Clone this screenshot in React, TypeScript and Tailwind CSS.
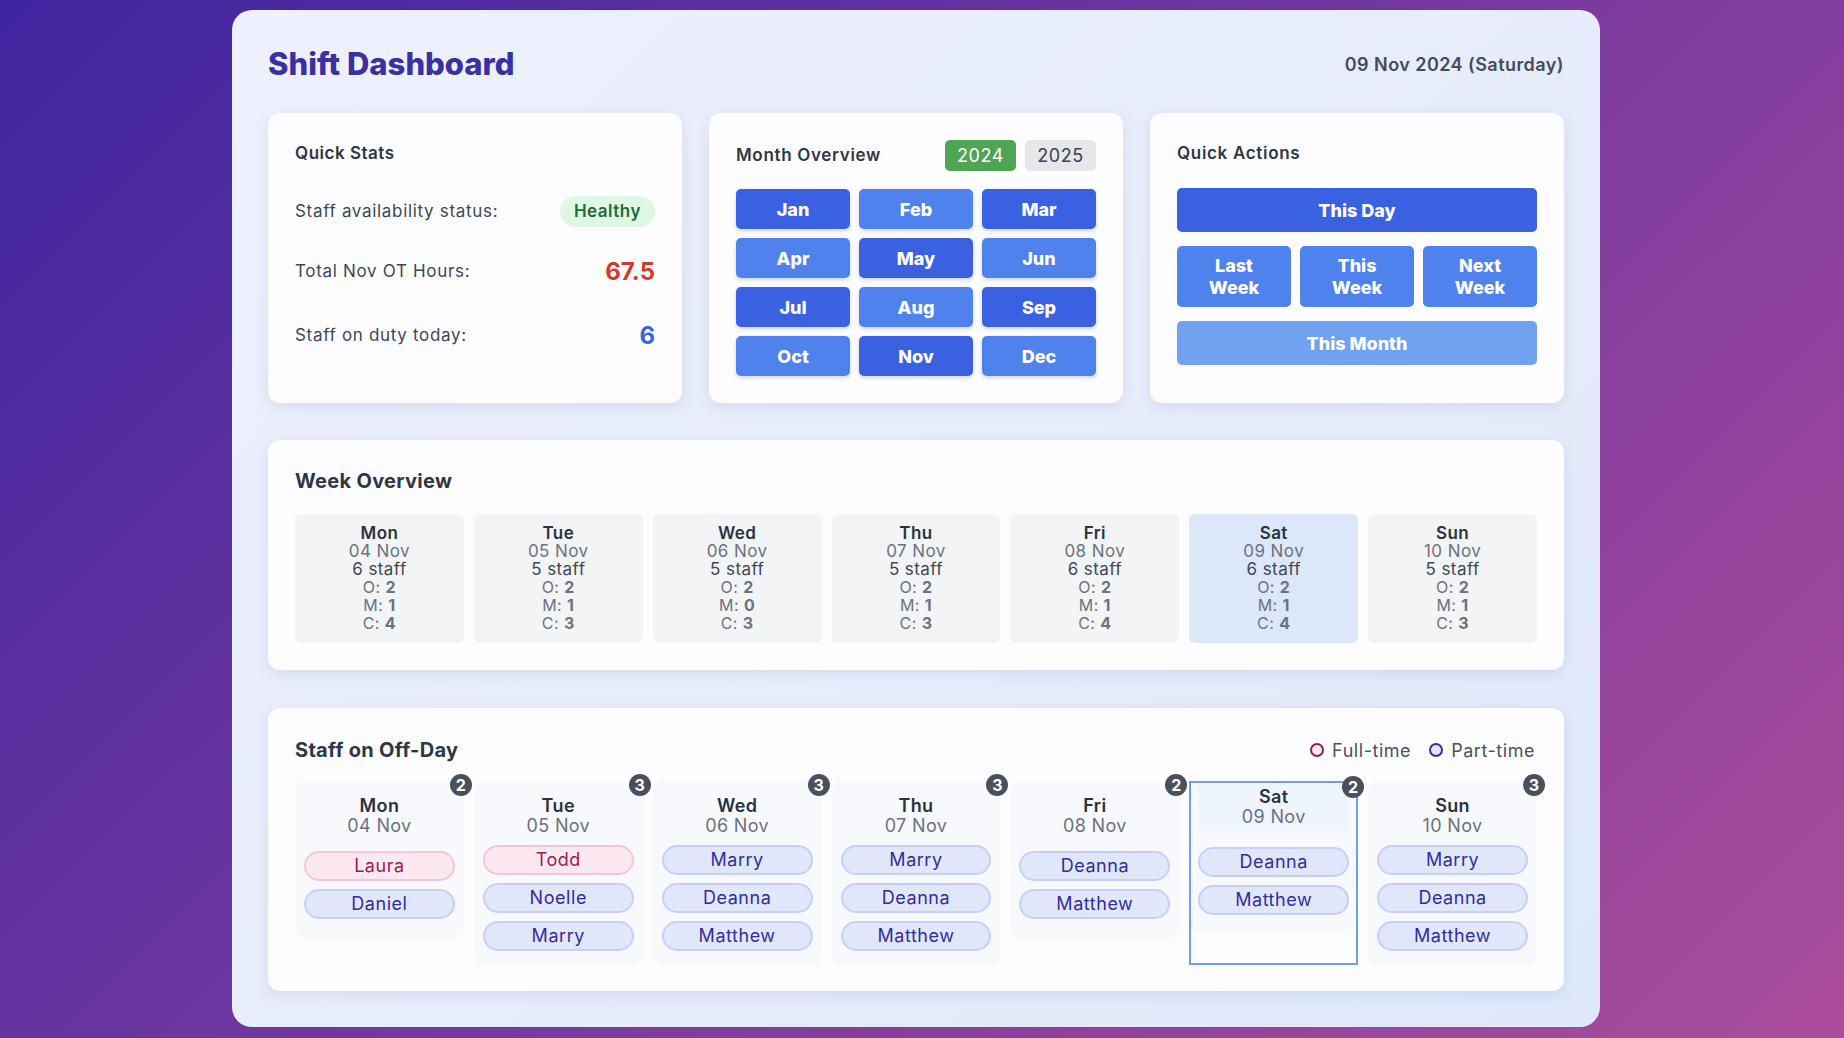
import React from "react";

type Week = { day: string; date: string; staff: number; o: number; m: number; c: number; today?: boolean };
type OffDay = { day: string; date: string; today?: boolean; people: { name: string; full: boolean }[] };

const months: [string, boolean][] = [
  ["Jan", true], ["Feb", false], ["Mar", true],
  ["Apr", false], ["May", true], ["Jun", false],
  ["Jul", true], ["Aug", false], ["Sep", true],
  ["Oct", false], ["Nov", true], ["Dec", false],
];

const week: Week[] = [
  { day: "Mon", date: "04 Nov", staff: 6, o: 2, m: 1, c: 4 },
  { day: "Tue", date: "05 Nov", staff: 5, o: 2, m: 1, c: 3 },
  { day: "Wed", date: "06 Nov", staff: 5, o: 2, m: 0, c: 3 },
  { day: "Thu", date: "07 Nov", staff: 5, o: 2, m: 1, c: 3 },
  { day: "Fri", date: "08 Nov", staff: 6, o: 2, m: 1, c: 4 },
  { day: "Sat", date: "09 Nov", staff: 6, o: 2, m: 1, c: 4, today: true },
  { day: "Sun", date: "10 Nov", staff: 5, o: 2, m: 1, c: 3 },
];

const pt = (name: string) => ({ name, full: false });
const ft = (name: string) => ({ name, full: true });

const offDays: OffDay[] = [
  { day: "Mon", date: "04 Nov", people: [ft("Laura"), pt("Daniel")] },
  { day: "Tue", date: "05 Nov", people: [ft("Todd"), pt("Noelle"), pt("Marry")] },
  { day: "Wed", date: "06 Nov", people: [pt("Marry"), pt("Deanna"), pt("Matthew")] },
  { day: "Thu", date: "07 Nov", people: [pt("Marry"), pt("Deanna"), pt("Matthew")] },
  { day: "Fri", date: "08 Nov", people: [pt("Deanna"), pt("Matthew")] },
  { day: "Sat", date: "09 Nov", today: true, people: [pt("Deanna"), pt("Matthew")] },
  { day: "Sun", date: "10 Nov", people: [pt("Marry"), pt("Deanna"), pt("Matthew")] },
];

const card = "rounded-xl bg-[#fdfdff] shadow-[0_4px_14px_rgba(70,90,160,0.13)]";

function QuickStats() {
  return (
    <section className={`${card} p-[27px]`}>
      <h2 className="text-[17px] font-semibold leading-[26px] tracking-[0.03em] text-[#2f3645]">Quick Stats</h2>
      <div className="mt-[30px] flex flex-col text-[17px] tracking-[0.04em] text-[#3f4654]">
        <div className="flex h-[31px] items-center justify-between">
          <span>Staff availability status:</span>
          <span className="flex h-[31px] items-center rounded-full bg-[#dff7e5] px-[14px] text-[17px] font-semibold tracking-[0.03em] text-[#1f6b34]">
            Healthy
          </span>
        </div>
        <div className="mt-[29px] flex h-[32px] items-center justify-between">
          <span>Total Nov OT Hours:</span>
          <span className="text-[24px] font-bold tracking-normal text-[#d03a2f]">67.5</span>
        </div>
        <div className="mt-[32px] flex h-[32px] items-center justify-between">
          <span>Staff on duty today:</span>
          <span className="text-[24px] font-bold tracking-normal text-[#3b62e0]">6</span>
        </div>
      </div>
    </section>
  );
}

function MonthOverview() {
  return (
    <section className={`${card} p-[27px]`}>
      <div className="flex h-[31px] items-center justify-between">
        <h2 className="text-[17px] font-semibold tracking-[0.04em] text-[#2f3645]">Month Overview</h2>
        <div className="flex gap-[9px] text-[18px]">
          <button className="h-[31px] w-[71px] rounded-[5px] bg-[#4ea554] tracking-[0.03em] text-white">2024</button>
          <button className="h-[31px] w-[71px] rounded-[5px] bg-[#e5e7eb] tracking-[0.03em] text-[#374151]">2025</button>
        </div>
      </div>
      <div className="mt-[18px] grid grid-cols-3 gap-[9px]">
        {months.map(([m, dark]) => (
          <button
            key={m}
            className={`h-[40px] rounded-[5px] text-[18px] font-extrabold text-white shadow-[0_2px_4px_rgba(40,60,140,0.2)] ${
              dark ? "bg-[#3a61e1]" : "bg-[#5082ed]"
            }`}
          >
            {m}
          </button>
        ))}
      </div>
    </section>
  );
}

function QuickActions() {
  return (
    <section className={`${card} p-[27px]`}>
      <h2 className="text-[17px] font-semibold leading-[26px] tracking-[0.04em] text-[#2f3645]">Quick Actions</h2>
      <button className="mt-[22px] h-[44px] w-full rounded-[5px] bg-[#3a61e1] text-[18px] font-extrabold text-white">
        This Day
      </button>
      <div className="mt-[14px] grid grid-cols-3 gap-[9px]">
        {["Last", "This", "Next"].map((w) => (
          <button
            key={w}
            className="h-[61px] rounded-[5px] bg-[#5082ed] text-[18px] font-extrabold leading-[22px] text-white"
          >
            {w}
            <br />
            Week
          </button>
        ))}
      </div>
      <button className="mt-[14px] h-[44px] w-full rounded-[5px] bg-[#71a2f2] text-[18px] font-extrabold text-white">
        This Month
      </button>
    </section>
  );
}

function WeekOverview() {
  return (
    <section className={`${card} px-[27px] pb-[27px] pt-[27px]`}>
      <h2 className="text-[20px] font-bold leading-[28px] tracking-[0.015em] text-[#2f3645]">Week Overview</h2>
      <div className="mt-[19px] grid grid-cols-7 gap-[10px]">
        {week.map((d) => (
          <div
            key={d.day}
            className={`rounded-md pb-[11px] pt-[10px] text-center text-[17px] leading-[18px] tracking-[0.025em] ${
              d.today ? "bg-[#dce7f9]" : "bg-[#f3f4f6]"
            }`}
          >
            <div className="font-semibold text-[#2b3240]">{d.day}</div>
            <div className="text-[#6b7280]">{d.date}</div>
            <div className="text-[#3f4654]">{d.staff} staff</div>
            <div className="text-[16px] text-[#6b7280]">
              O: <b className="font-bold">{d.o}</b>
            </div>
            <div className="text-[16px] text-[#6b7280]">
              M: <b className="font-bold">{d.m}</b>
            </div>
            <div className="text-[16px] text-[#6b7280]">
              C: <b className="font-bold">{d.c}</b>
            </div>
          </div>
        ))}
      </div>
    </section>
  );
}

function Chip({ name, full }: { name: string; full: boolean }) {
  return (
    <div
      className={`flex h-[30px] items-center justify-center rounded-full border-2 pb-[1px] text-[18px] tracking-[0.03em] ${
        full ? "border-[#f5c6d8] bg-[#fbe8f0] text-[#9d1c4b]" : "border-[#c6d0f7] bg-[#e1e7fb] text-[#332c9e]"
      }`}
    >
      {name}
    </div>
  );
}

function Badge({ n }: { n: number }) {
  return (
    <span className="absolute -right-[8px] -top-[7px] flex h-[22px] w-[22px] items-center justify-center rounded-full bg-[#4a505c] text-[16px] font-bold text-white">
      {n}
    </span>
  );
}

function OffDayColumn({ d }: { d: OffDay }) {
  const chips = (
    <div className="flex min-h-[79px] flex-col justify-center gap-[8px]">
      {d.people.map((p) => (
        <Chip key={p.name} {...p} />
      ))}
    </div>
  );
  const head = (
    <>
      <div className="text-[18px] font-semibold leading-[20px] tracking-[0.02em] text-[#2b3240]">{d.day}</div>
      <div className="text-[18px] leading-[20px] tracking-[0.02em] text-[#6b7280]">{d.date}</div>
    </>
  );

  if (d.today) {
    return (
      <div className="relative self-stretch border-2 border-[#6b9ef0]">
        <div className="rounded-b-[10px] bg-[#f8f9fc] px-[7px] pb-[13px]">
          <div className="bg-[#eff5ff] py-[4px] text-center">{head}</div>
          <div className="mt-[10px]">{chips}</div>
        </div>
        <Badge n={d.people.length} />
      </div>
    );
  }

  return (
    <div className="relative rounded-[10px] bg-[#f8f9fc] px-[9px] pb-[14px] pt-[15px]">
      <div className="text-center">{head}</div>
      <div className="mt-[9px]">{chips}</div>
      <Badge n={d.people.length} />
    </div>
  );
}

function OffDayPanel() {
  return (
    <section className={`${card} px-[27px] pb-[26px] pt-[28px]`}>
      <div className="flex items-center justify-between">
        <h2 className="text-[20px] font-bold leading-[28px] tracking-[0.015em] text-[#2f3645]">Staff on Off-Day</h2>
        <div className="flex items-center gap-[18px] pr-[2px] text-[18px] tracking-[0.03em] text-[#4b5260]">
          <span className="flex items-center gap-[8px]">
            <span className="h-[14px] w-[14px] rounded-full border-2 border-[#9d1c4b] bg-[#fce7f3]" />
            Full-time
          </span>
          <span className="flex items-center gap-[8px]">
            <span className="h-[14px] w-[14px] rounded-full border-2 border-[#3730a3] bg-[#e0e7ff]" />
            Part-time
          </span>
        </div>
      </div>
      <div className="mt-[17px] grid grid-cols-7 items-start gap-[10px]">
        {offDays.map((d) => (
          <OffDayColumn key={d.day} d={d} />
        ))}
      </div>
    </section>
  );
}

export default function App() {
  return (
    <div className="min-h-screen bg-[linear-gradient(135deg,#3f25a0_0%,#7a3a9f_55%,#ab4d9b_100%)] py-[10px] pr-3 font-[Inter,sans-serif]">
      <main className="mx-auto w-[1368px] rounded-[20px] bg-[linear-gradient(135deg,#eef1fd_0%,#e6ecfb_60%,#dee8fa_100%)] p-9">
        <header className="mb-[31px] flex h-[36px] items-center justify-between">
          <h1 className="text-[31px] font-extrabold text-[#3a2fa5]">Shift Dashboard</h1>
          <div className="text-[18px] font-semibold tracking-[0.025em] text-[#454b57]">09 Nov 2024 (Saturday)</div>
        </header>
        <div className="grid grid-cols-3 gap-[27px]">
          <QuickStats />
          <MonthOverview />
          <QuickActions />
        </div>
        <div className="mt-[37px]">
          <WeekOverview />
        </div>
        <div className="mt-[38px]">
          <OffDayPanel />
        </div>
      </main>
    </div>
  );
}
